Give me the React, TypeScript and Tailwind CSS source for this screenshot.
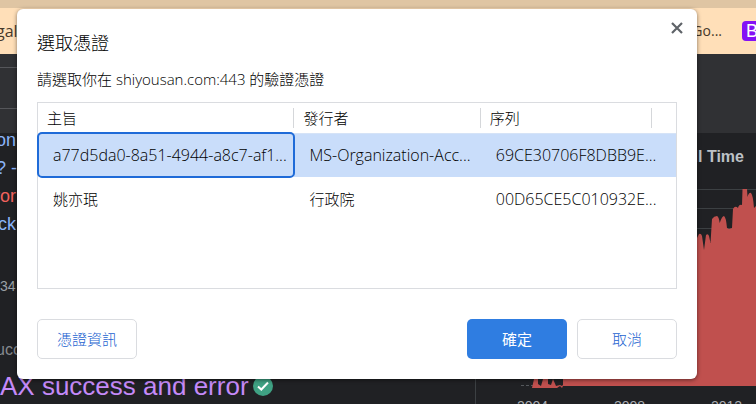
import React from "react";

const uiFont = "font-['Open_Sans','Noto_Sans_CJK_TC',sans-serif]";
const pageFont = "font-['Liberation_Sans','Noto_Sans_CJK_TC',sans-serif]";

const certificates = [
  {
    subject: "a77d5da0-8a51-4944-a8c7-af1...",
    issuer: "MS-Organization-Acc...",
    serial: "69CE30706F8DBB9E...",
    selected: true,
  },
  { subject: "姚亦珉", issuer: "行政院", serial: "00D65CE5C010932E...", selected: false },
];

// Latin identifiers look smaller than Chinese names, so they get a larger size.
function sizeOf(text: string) {
  return /^[\x20-\x7e]+$/.test(text) ? "text-base text-black" : "text-[15px] text-black";
}

function BookmarksBar() {
  return (
    <header className={`${uiFont} text-sm text-[#46382a]`}>
      <div className="h-2 bg-[#dfc5a3]" />
      <div className="flex h-[46px] items-center justify-between bg-[#ffdfb8]">
        <span className="-ml-1 text-base">gal</span>
        <div className="flex items-center gap-5">
          <span>Go...</span>
          <span className="h-5 w-3.5 overflow-hidden rounded-l bg-[#8411f5] pl-1 font-['Liberation_Sans',sans-serif] text-lg leading-5 text-white">
            B
          </span>
        </div>
      </div>
    </header>
  );
}

function SearchHeader() {
  return (
    <div className="h-[79px] shrink-0 bg-[#303134] pt-[13px]">
      <div className="h-[42px] w-1/2 border-y border-[#55565a]" />
    </div>
  );
}

function Results() {
  return (
    <section className="flex grow flex-col border-r border-[#3c4043]">
      <div className="-mt-[7px] -ml-1 text-lg leading-7 text-[#8ab4f8]">
        <p>on</p>
        <p>? -</p>
        <p className="-ml-0.5 text-[#f0625d]">ror</p>
        <p className="pl-0.5">ck</p>
      </div>
      <p className="mt-[34px] text-sm leading-7 text-[#9aa0a6]">34</p>
      <p className="-ml-1 mt-9 text-base leading-7 text-[#85898e]">ucc</p>
      <h2 className="mt-1.5 flex items-center gap-1 text-[26px] leading-8 text-[#c58af9]">
        AX success and error
        <svg viewBox="0 0 20 20" className="size-5" aria-hidden="true">
          <circle cx="10" cy="10" r="10" fill="#3fa183" />
          <path d="M5 10.5l3.3 3L15 6.5" fill="none" stroke="#fff" strokeWidth="2" />
        </svg>
      </h2>
    </section>
  );
}

function TrendChart() {
  return (
    <section className="w-[280px] shrink-0 text-[#a8abb0]">
      <h2 className="pt-3 pr-3 text-right text-base leading-6 font-bold text-[#bdc1c6]">Overall Time</h2>
      <svg viewBox="476 169 280 221" className="block h-[221px] w-full" aria-hidden="true">
        <path d="M520 189.5H756M520 208.5H756M520 228.5H756" stroke="#3c4043" />
        <path d="M521 385.500H533" stroke="#55585c" strokeDasharray="3 2" />
        <path
          fill="#c0504e"
          d="M532 388L534 379H538V384L541 386L543 379H548V384L551 385L553 379L556 386L560 385L562 386L640 290L697 238L699 234Q701 233 702 236L704 250L706 235Q708 233 709 236L710.500 243L712 219Q714 216 717 216Q719 217 719.700 223Q722 216 724 216Q726 217 727 228L729 229L732 228L733 209Q735 205 738 208Q739 204 742 205L742.500 189H747L747.500 197Q749 192 751 193Q753 195 754 208L756 206V386H563L562 388L560 386L557 388Z"
        />
        <path fill="#c0504e" d="M563 379H697V386H563Z" />
      </svg>
      <div className="flex pl-2 text-center text-sm leading-8">
        <span className="w-[97px] shrink-0">2004</span>
        <span className="w-[97px] shrink-0">2008</span>
        <span className="w-[97px] shrink-0">2012</span>
      </div>
    </section>
  );
}

function CertificateTable() {
  return (
    <div className="h-[187px] border border-[#dadce0]">
      <table className="w-full table-fixed border-collapse text-left">
        <colgroup>
          <col className="w-[40.2%]" />
          <col className="w-[29.2%]" />
          <col className="w-[26.8%]" />
          <col />
        </colgroup>
        <thead>
          <tr className="h-[30px] border-b border-[#d5e3f7] leading-5">
            {["主旨", "發行者", "序列"].map((title) => (
              <th key={title} scope="col" className="p-0 font-light text-black">
                <span className="block border-r border-[#d5d7da] pl-[9px]">{title}</span>
              </th>
            ))}
            <td />
          </tr>
        </thead>
        <tbody>
          {certificates.map((c) => (
            <tr key={c.serial} className={`h-11 ${c.selected ? "bg-[#c9ddfa]" : ""}`}>
              <td
                className={`whitespace-nowrap pl-[15px] ${sizeOf(c.subject)} ${
                  c.selected ? "rounded outline-2 -outline-offset-1 outline-[#1f6bd8]" : ""
                }`}
              >
                {c.subject}
              </td>
              <td className={`whitespace-nowrap pl-[15px] ${sizeOf(c.issuer)}`}>{c.issuer}</td>
              <td className={`whitespace-nowrap pl-[15px] ${sizeOf(c.serial)}`}>{c.serial}</td>
              <td />
            </tr>
          ))}
        </tbody>
      </table>
    </div>
  );
}

function CertificateDialog() {
  return (
    <div
      role="dialog"
      aria-labelledby="dialog-title"
      className={`absolute top-[9px] right-[59px] left-[17px] rounded-md bg-white px-5 pt-5 pb-5 shadow-[0_1px_4px_rgba(0,0,0,0.5)] ${uiFont} text-[15px] font-light text-[#202124]`}
    >
      <button type="button" aria-label="關閉" className="absolute top-3 right-[13px] text-[#5f6368]">
        <svg viewBox="0 0 14 14" className="size-3.5" aria-hidden="true">
          <path d="M2 2l10 10M12 2L2 12" stroke="currentColor" strokeWidth="2.2" />
        </svg>
      </button>
      <h1 id="dialog-title" className="text-lg leading-7 text-black">
        選取憑證
      </h1>
      <p className="my-3 leading-[21px] text-black">請選取你在 shiyousan.com:443 的驗證憑證</p>
      <CertificateTable />
      <div className="mt-[30px] flex gap-2.5 text-[#1a62d0]">
        <button type="button" className="mr-auto h-10 w-[100px] rounded-[5px] border border-[#dadce0]">
          憑證資訊
        </button>
        <button type="button" className="h-10 w-[100px] rounded-[5px] bg-[#2f7de1] font-normal text-white">
          確定
        </button>
        <button type="button" className="h-10 w-[100px] rounded-[5px] border border-[#dadce0]">
          取消
        </button>
      </div>
    </div>
  );
}

export default function App() {
  return (
    <div className={`relative flex h-screen flex-col overflow-hidden bg-[#202124] ${pageFont}`}>
      <BookmarksBar />
      <SearchHeader />
      <main className="flex min-h-0 grow">
        <Results />
        <TrendChart />
      </main>
      <CertificateDialog />
    </div>
  );
}
